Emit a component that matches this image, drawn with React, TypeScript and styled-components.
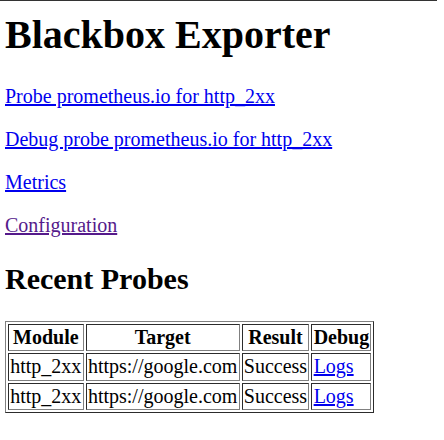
import React, { ReactElement } from 'react'
import styled, { createGlobalStyle } from 'styled-components'

interface Probe {
  module: string,
  target: string,
  result: string,
}

const GlobalStyle = createGlobalStyle`
  html {
    background: linear-gradient(#333, #333) no-repeat 0 0 / 437px 1px;
  }
  body {
    margin: 0 5px;
    font-family: "Liberation Serif", "Times New Roman", serif;
    font-size: 20px;
    color: #000;
  }
`

const Title = styled.h1`
  font-size: 2em;
  margin: 11px 0 0.67em;
`

const SubTitle = styled.h2`
  font-size: 1.5em;
  margin: 0.83em 0;
`

const LinkLine = styled.p`
  margin: 1em 0;
`

const Link = styled.a<{ $visited?: boolean }>`
  color: ${props => props.$visited ? '#551a8b' : '#0000ee'};
  text-decoration: underline;
`

const ProbeTable = styled.table`
  border: 1px outset #808080;
  border-spacing: 2.5px;
`

const HeadCell = styled.th`
  border: 1px inset #808080;
  padding: 1.25px;
  font-weight: bold;
`

const Cell = styled.td`
  border: 1px inset #808080;
  padding: 1.25px;
`

const probes: Probe[] = [
  {module: 'http_2xx', target: 'https://google.com', result: 'Success'},
  {module: 'http_2xx', target: 'https://google.com', result: 'Success'},
]

const App: React.FC = (): ReactElement => {
  return (
    <>
      <GlobalStyle />
      <Title>Blackbox Exporter</Title>
      <LinkLine><Link href="#probe">Probe prometheus.io for http_2xx</Link></LinkLine>
      <LinkLine><Link href="#debug">Debug probe prometheus.io for http_2xx</Link></LinkLine>
      <LinkLine><Link href="#metrics">Metrics</Link></LinkLine>
      <LinkLine><Link href="#config" $visited>Configuration</Link></LinkLine>
      <SubTitle>Recent Probes</SubTitle>
      <ProbeTable>
        <thead>
          <tr>
            <HeadCell>Module</HeadCell>
            <HeadCell>Target</HeadCell>
            <HeadCell>Result</HeadCell>
            <HeadCell>Debug</HeadCell>
          </tr>
        </thead>
        <tbody>
          {probes.map((probe, i) => (
            <tr key={i}>
              <Cell>{probe.module}</Cell>
              <Cell>{probe.target}</Cell>
              <Cell>{probe.result}</Cell>
              <Cell><Link href="#logs">Logs</Link></Cell>
            </tr>
          ))}
        </tbody>
      </ProbeTable>
    </>
  )
}

export default App
